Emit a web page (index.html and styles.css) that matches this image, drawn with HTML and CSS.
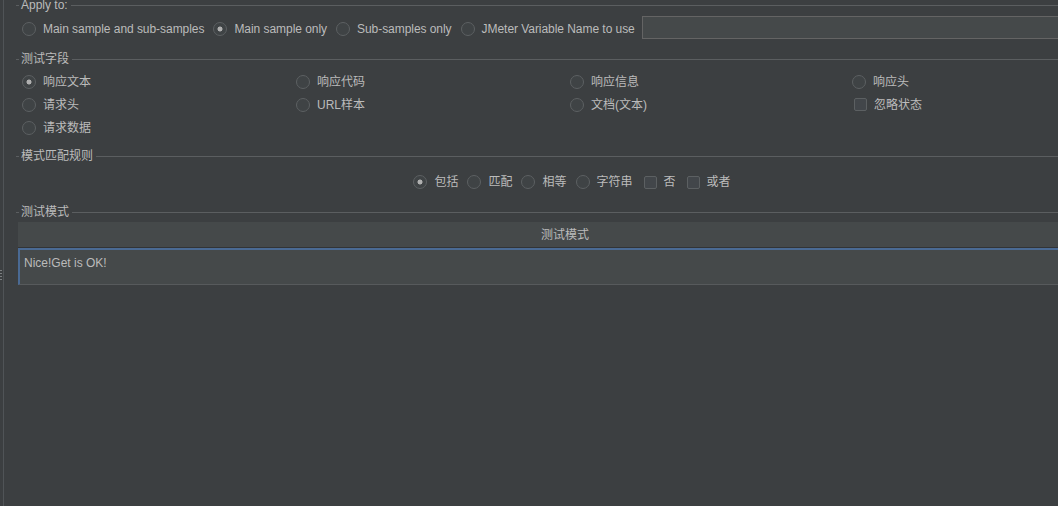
FILE: index.html
```html
<!DOCTYPE html>
<html>
<head>
<meta charset="utf-8">
<link rel="stylesheet" href="styles.css">
</head>
<body>
<div class="window">
  <div class="divider"><div class="grip"></div></div>
  <div class="main">
    <section class="group group-apply">
      <div class="group-title"><span>Apply to:</span></div>
      <div class="apply-row">
        <label class="opt"><span class="radio"></span>Main sample and sub-samples</label>
        <label class="opt"><span class="radio checked"></span>Main sample only</label>
        <label class="opt"><span class="radio"></span>Sub-samples only</label>
        <label class="opt"><span class="radio"></span>JMeter Variable Name to use</label>
        <div class="var-input"></div>
      </div>
    </section>

    <section class="group group-fields">
      <div class="group-title"><span>测试字段</span></div>
      <div class="field-grid">
        <label class="opt"><span class="radio checked"></span>响应文本</label>
        <label class="opt"><span class="radio"></span>响应代码</label>
        <label class="opt"><span class="radio"></span>响应信息</label>
        <label class="opt"><span class="radio"></span>响应头</label>
        <label class="opt"><span class="radio"></span>请求头</label>
        <label class="opt"><span class="radio"></span>URL样本</label>
        <label class="opt"><span class="radio"></span>文档(文本)</label>
        <label class="opt"><span class="check"></span>忽略状态</label>
        <label class="opt"><span class="radio"></span>请求数据</label>
      </div>
    </section>

    <section class="group group-rules">
      <div class="group-title"><span>模式匹配规则</span></div>
      <div class="match-row">
        <label class="opt"><span class="radio checked"></span>包括</label>
        <label class="opt"><span class="radio"></span>匹配</label>
        <label class="opt"><span class="radio"></span>相等</label>
        <label class="opt"><span class="radio"></span>字符串</label>
        <label class="opt"><span class="check"></span>否</label>
        <label class="opt"><span class="check"></span>或者</label>
      </div>
    </section>

    <section class="group group-patterns">
      <div class="group-title"><span>测试模式</span></div>
      <div class="table">
        <div class="thead">测试模式</div>
        <div class="cell">Nice!Get is OK!</div>
      </div>
    </section>
  </div>
</div>
</body>
</html>
```

FILE: styles.css
```css
html, body {
  margin: 0;
  padding: 0;
}
body {
  background: #3c3f41;
  overflow: hidden;
  font-family: "Liberation Sans", "Noto Sans CJK SC", sans-serif;
  font-size: 12px;
  line-height: 14px;
  color: #bbbbbb;
}
.window {
  display: flex;
  width: 1058px;
  height: 506px;
  overflow: hidden;
}
.divider {
  flex: none;
  width: 3px;
  border-right: 1px solid #505457;
}
.grip {
  margin-top: 270px;
  width: 2px;
  height: 12px;
  background: repeating-linear-gradient(to bottom, #7c7f81 0 1px, transparent 1px 3px);
}
.main {
  flex: none;
  width: 1112px;
  margin-left: 12px;
}
.group-title {
  display: flex;
  align-items: center;
  height: 14px;
  white-space: nowrap;
}
.group-title::before {
  content: "";
  width: 3px;
  height: 1px;
  background: #5b5e60;
  margin-right: 2px;
}
.group-title::after {
  content: "";
  flex: 1;
  height: 1px;
  background: #5b5e60;
  margin-left: 3px;
}
.group-apply .group-title { margin-top: -2px; }
.group-fields .group-title { margin-top: 11px; }
.group-rules .group-title { margin-top: 10px; }
.group-patterns .group-title { margin-top: 11px; }

.opt {
  display: flex;
  align-items: center;
  white-space: nowrap;
}
.radio {
  flex: none;
  box-sizing: border-box;
  width: 14px;
  height: 14px;
  border: 1px solid #5c6062;
  border-radius: 50%;
  background: #3f4345;
  margin-right: 7px;
}
.radio.checked {
  background: radial-gradient(circle, #b0b0b0 0 2.2px, #3f4345 2.8px);
}
.check {
  flex: none;
  box-sizing: border-box;
  width: 13px;
  height: 13px;
  border: 1px solid #5c6062;
  border-radius: 2px;
  background: #42464a;
  margin: 0 7px 0 2px;
}

.apply-row {
  display: flex;
  align-items: center;
  gap: 9px;
  height: 24px;
  margin-top: 5px;
  padding-left: 6px;
  letter-spacing: -0.05px;
}
.var-input {
  flex: 1;
  align-self: flex-start;
  box-sizing: border-box;
  height: 23px;
  margin-top: -1px;
  margin-left: -2px;
  border: 1px solid #646464;
  background: #45494a;
}

.field-grid {
  display: grid;
  grid-template-columns: 274px 274px 282px 1fr;
  grid-auto-rows: 23px;
  align-items: center;
  margin-top: 4px;
  padding-left: 6px;
}

.match-row {
  display: flex;
  justify-content: center;
  align-items: center;
  gap: 9px;
  height: 24px;
  margin-top: 7px;
}

.table {
  margin: 3px 16px 0 2px;
}
.thead {
  height: 25px;
  background: #45494a;
  border-bottom: 1px solid #323436;
  display: flex;
  align-items: center;
  justify-content: center;
}
.cell {
  box-sizing: content-box;
  height: 28px;
  border-top: 2px solid #4a6a94;
  border-left: 2px solid #4a6a94;
  border-bottom: 1px solid #575a5c;
  background: #45494a;
  padding: 6px 0 0 4px;
}
```
